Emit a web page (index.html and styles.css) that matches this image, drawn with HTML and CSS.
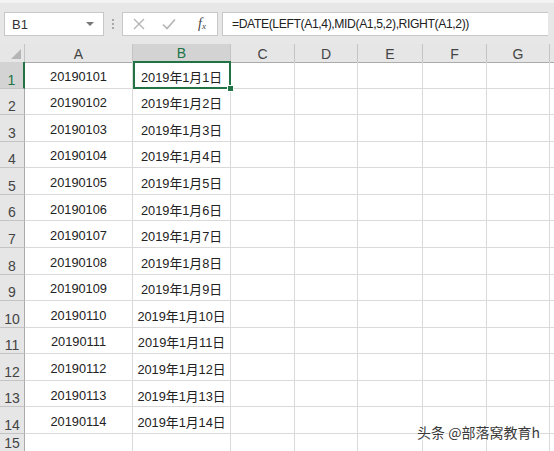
FILE: index.html
```html
<!DOCTYPE html>
<html>
<head>
<meta charset="utf-8">
<link rel="stylesheet" href="styles.css">
</head>
<body>
<div class="app">
  <div class="toolbar">
    <div class="namebox"><span class="name">B1</span><span class="caret"></span></div>
    <div class="grip"><i></i><i></i><i></i></div>
    <div class="btns">
      <svg class="ic" width="14" height="14" viewBox="0 0 14 14"><path d="M2 2 L12 12 M12 2 L2 12" stroke="#b4b4b4" stroke-width="1.4" fill="none"/></svg>
      <svg class="ic" width="16" height="14" viewBox="0 0 16 14"><path d="M2 7.5 L6 11.5 L14 2.5" stroke="#b4b4b4" stroke-width="1.6" fill="none"/></svg>
      <span class="fx">f<sub>x</sub></span>
    </div>
    <div class="formula">=DATE(LEFT(A1,4),MID(A1,5,2),RIGHT(A1,2))</div>
  </div>
  <div class="sheet">
    <div class="row hdr">
      <div class="c rh corner"><span class="tri"></span></div>
      <div class="c ch">A</div><div class="c ch sel">B</div><div class="c ch">C</div><div class="c ch">D</div><div class="c ch">E</div><div class="c ch">F</div><div class="c ch">G</div><div class="c ch"></div>
    </div>
    <div class="row"><div class="c rh sel">1</div><div class="c">20190101</div><div class="c active">2019年1月1日<span class="handle"></span></div><div class="c"></div><div class="c"></div><div class="c"></div><div class="c"></div><div class="c"></div><div class="c"></div></div>
    <div class="row"><div class="c rh">2</div><div class="c">20190102</div><div class="c">2019年1月2日</div><div class="c"></div><div class="c"></div><div class="c"></div><div class="c"></div><div class="c"></div><div class="c"></div></div>
    <div class="row"><div class="c rh">3</div><div class="c">20190103</div><div class="c">2019年1月3日</div><div class="c"></div><div class="c"></div><div class="c"></div><div class="c"></div><div class="c"></div><div class="c"></div></div>
    <div class="row"><div class="c rh">4</div><div class="c">20190104</div><div class="c">2019年1月4日</div><div class="c"></div><div class="c"></div><div class="c"></div><div class="c"></div><div class="c"></div><div class="c"></div></div>
    <div class="row"><div class="c rh">5</div><div class="c">20190105</div><div class="c">2019年1月5日</div><div class="c"></div><div class="c"></div><div class="c"></div><div class="c"></div><div class="c"></div><div class="c"></div></div>
    <div class="row"><div class="c rh">6</div><div class="c">20190106</div><div class="c">2019年1月6日</div><div class="c"></div><div class="c"></div><div class="c"></div><div class="c"></div><div class="c"></div><div class="c"></div></div>
    <div class="row"><div class="c rh">7</div><div class="c">20190107</div><div class="c">2019年1月7日</div><div class="c"></div><div class="c"></div><div class="c"></div><div class="c"></div><div class="c"></div><div class="c"></div></div>
    <div class="row"><div class="c rh">8</div><div class="c">20190108</div><div class="c">2019年1月8日</div><div class="c"></div><div class="c"></div><div class="c"></div><div class="c"></div><div class="c"></div><div class="c"></div></div>
    <div class="row"><div class="c rh">9</div><div class="c">20190109</div><div class="c">2019年1月9日</div><div class="c"></div><div class="c"></div><div class="c"></div><div class="c"></div><div class="c"></div><div class="c"></div></div>
    <div class="row"><div class="c rh">10</div><div class="c">20190110</div><div class="c">2019年1月10日</div><div class="c"></div><div class="c"></div><div class="c"></div><div class="c"></div><div class="c"></div><div class="c"></div></div>
    <div class="row"><div class="c rh">11</div><div class="c">20190111</div><div class="c">2019年1月11日</div><div class="c"></div><div class="c"></div><div class="c"></div><div class="c"></div><div class="c"></div><div class="c"></div></div>
    <div class="row"><div class="c rh">12</div><div class="c">20190112</div><div class="c">2019年1月12日</div><div class="c"></div><div class="c"></div><div class="c"></div><div class="c"></div><div class="c"></div><div class="c"></div></div>
    <div class="row"><div class="c rh">13</div><div class="c">20190113</div><div class="c">2019年1月13日</div><div class="c"></div><div class="c"></div><div class="c"></div><div class="c"></div><div class="c"></div><div class="c"></div></div>
    <div class="row"><div class="c rh">14</div><div class="c">20190114</div><div class="c">2019年1月14日</div><div class="c"></div><div class="c"></div><div class="c"></div><div class="c"></div><div class="c"></div><div class="c"></div></div>
    <div class="row last"><div class="c rh">15</div><div class="c"></div><div class="c"></div><div class="c"></div><div class="c"></div><div class="c"></div><div class="c"></div><div class="c"></div><div class="c"></div></div>
  </div>
  <div class="watermark">头条 @部落窝教育h</div>
</div>
</body>
</html>
```

FILE: styles.css
```css
html, body {
  margin: 0;
  padding: 0;
  background: #ffffff;
}
.app {
  position: relative;
  width: 554px;
  height: 451px;
  overflow: hidden;
  font-family: "Liberation Sans", "Noto Sans CJK SC", sans-serif;
  color: #222;
}
.toolbar {
  height: 44px;
  box-sizing: border-box;
  background: #e7e7e7;
  border-top: 3px solid #f3f3f3;
  display: flex;
  align-items: flex-start;
  padding: 9px 0 0 4px;
}
.namebox {
  width: 100px;
  height: 24px;
  box-sizing: border-box;
  background: #fff;
  border: 1px solid #c8c8c8;
  display: flex;
  align-items: center;
  justify-content: space-between;
  padding: 0 9px 0 7px;
  font-size: 13px;
  color: #333;
}
.caret {
  width: 0;
  height: 0;
  border-left: 4px solid transparent;
  border-right: 4px solid transparent;
  border-top: 4px solid #777;
}
.grip {
  width: 18px;
  height: 24px;
  display: flex;
  flex-direction: column;
  align-items: center;
  justify-content: center;
  gap: 2px;
}
.grip i {
  width: 2px;
  height: 2px;
  background: #a8a8a8;
}
.btns {
  width: 96px;
  height: 24px;
  box-sizing: border-box;
  background: #fff;
  border: 1px solid #c8c8c8;
  display: flex;
  align-items: center;
  padding-left: 9px;
  gap: 15px;
}
.btns .ic { display: block; }
.fx {
  font-family: "Liberation Serif", serif;
  font-style: italic;
  font-size: 14px;
  color: #444;
  margin-left: 6px;
}
.fx sub {
  font-size: 9px;
  vertical-align: -1px;
}
.formula {
  margin-left: 4px;
  flex: 1;
  margin-right: 6px;
  height: 24px;
  box-sizing: border-box;
  background: #fff;
  border: 1px solid #c8c8c8;
  border-right: none;
  padding-left: 9px;
  font-size: 12.2px;
  letter-spacing: -0.4px;
  line-height: 22px;
  color: #222;
  white-space: nowrap;
}
.sheet {
  display: flex;
  flex-direction: column;
}
.row {
  display: grid;
  grid-template-columns: 25px 108px 98px 64px 63px 65px 64px 63px 20px;
  height: 26.57px;
}
.row.hdr {
  height: 18px;
}
.row.last {
  height: 17px;
}
.c {
  box-sizing: border-box;
  border-right: 1px solid #dadada;
  border-bottom: 1px solid #dadada;
  font-size: 12.8px;
  display: flex;
  align-items: center;
  justify-content: center;
  padding-top: 3px;
  white-space: nowrap;
  color: #222;
  position: relative;
}
.hdr .c {
  background: #e6e6e6;
  border-right: 1px solid #c4c4c4;
  border-bottom: 1px solid #ababab;
  font-size: 14px;
  color: #444;
  padding-top: 1px;
}
.hdr .c.sel {
  background: #d3d3d3;
  color: #217346;
  border-bottom: 2px solid #217346;
}
.corner {
  justify-content: flex-end;
  align-items: flex-end;
}
.tri {
  width: 0;
  height: 0;
  border-left: 10px solid transparent;
  border-bottom: 10px solid #b5b5b5;
  margin: 0 3px 3px 0;
}
.rh {
  background: #e6e6e6;
  border-right: 1px solid #ababab;
  border-bottom: 1px solid #c4c4c4;
  font-size: 14px;
  line-height: 15px;
  color: #444;
  align-items: flex-end;
  padding: 0;
}
.last .c {
  border-bottom: none;
  padding-top: 0;
}
.rh.sel {
  background: #d3d3d3;
  color: #217346;
  border-right: 2px solid #217346;
}
.active::after {
  content: "";
  position: absolute;
  left: 0;
  top: -1px;
  right: -1px;
  bottom: -1px;
  border: 2px solid #217346;
}
.handle {
  position: absolute;
  right: -4px;
  bottom: -4px;
  width: 5px;
  height: 5px;
  background: #217346;
  border: 1px solid #fff;
  z-index: 2;
}
.watermark {
  position: absolute;
  left: 417px;
  top: 422px;
  font-family: "Noto Sans CJK SC", sans-serif;
  font-size: 14px;
  color: #3a3a3a;
  text-shadow: 0 0 2px #fff, 0 0 2px #fff, 1px 1px 0 #fff;
  white-space: nowrap;
}
```
